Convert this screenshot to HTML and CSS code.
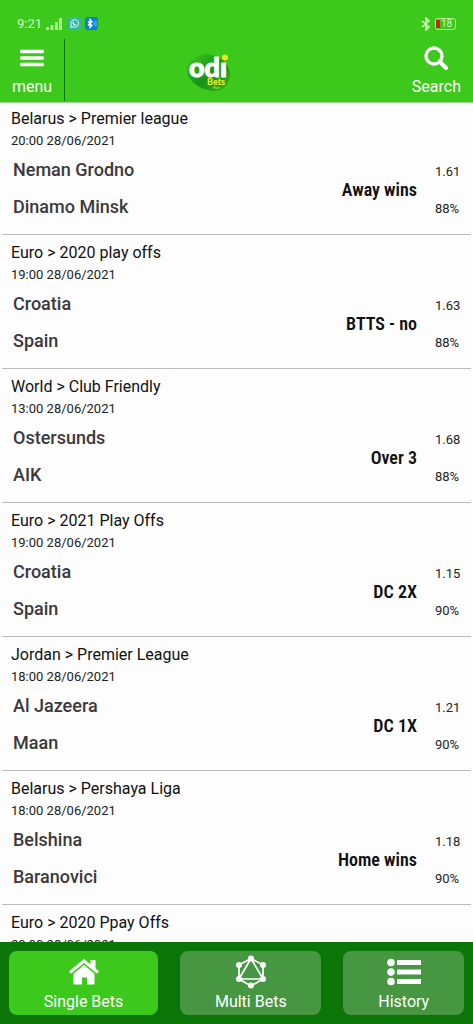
FILE: index.html
```html
<!DOCTYPE html>
<html lang="en">
<head>
<meta charset="utf-8">
<meta name="viewport" content="width=device-width, initial-scale=1">
<title>odiBets</title>
<link rel="stylesheet" href="styles.css">
</head>
<body>
<header class="header">
  <div class="status">
    <div class="status-group">
      <span class="clock">9:21</span>
      <svg class="signal" width="16" height="12" viewBox="0 0 16 12" aria-hidden="true"><path d="M0 9h3v3H0zM4.500 7h3v5h-3zM9 4h3v8H9zM13 0h3v12h-3z"/></svg>
      <svg width="13" height="13" viewBox="0 0 13 13" aria-hidden="true"><rect width="13" height="13" rx="3" fill="#35b5a3"/><path d="M2.700 10.400l.6-2.200a3.800 3.800 0 1 1 1.600 1.600z" fill="none" stroke="#d9fff2"/><path d="M5 4.800c0 2 1.500 3.300 3.200 3.300" fill="none" stroke="#d9fff2" stroke-width="1.300"/></svg>
      <svg width="13" height="13" viewBox="0 0 13 13" aria-hidden="true"><rect width="13" height="13" rx="3" fill="#087fd8"/><path d="M3 4.500l4 4-2 2v-8l2 2-4 4" fill="none" stroke="#fff" stroke-width="1.200"/><path d="M9 4.500v4M11 3.500v6" stroke="#8fd0fa" stroke-width=".8"/></svg>
    </div>
    <div class="status-group status-right">
      <svg width="10" height="14" viewBox="0 0 10 14" aria-hidden="true"><path d="M1 4l7 6-3 3V1l3 3-7 6" fill="none" stroke="#d4f7c4" stroke-width="1.500"/></svg>
      <span class="battery"><span class="battery-level"></span>18</span>
    </div>
  </div>
  <div class="toolbar">
    <button class="tool menu" type="button">
      <svg width="24" height="24" viewBox="0 0 24 24" aria-hidden="true"><path d="M1.500 5.500h21M1.500 12h21M1.500 18.500h21" stroke="#fff" stroke-width="3.400" stroke-linecap="round"/></svg>
      <span>menu</span>
    </button>
    <a class="logo" href="#" aria-label="odiBets">
      <svg width="48" height="44" viewBox="-2 0 48 44">
        <defs><linearGradient id="leaf" x1="0" y1="0" x2="1" y2="1"><stop offset="0" stop-color="#3dc81c"/><stop offset=".55" stop-color="#159219"/><stop offset="1" stop-color="#35b61c"/></linearGradient></defs>
        <path d="M9 7C2 11 -2 19 1 26c5 9 17 15 27 15 9 0 14-7 15-16C44 10 22-1 9 7z" fill="url(#leaf)"/>
        <text class="logo-main" x="2" y="27">od<tspan class="logo-i">ı</tspan></text>
        <circle cx="38" cy="7.500" r="3" fill="#f2e51b"/>
        <text class="logo-bets" x="20" y="35">Bets</text>
        <text class="logo-fun" x="26" y="39">Fun</text>
      </svg>
    </a>
    <button class="tool search" type="button">
      <svg width="24" height="24" viewBox="0 0 24 24" aria-hidden="true"><circle cx="10" cy="10" r="8" fill="none" stroke="#fff" stroke-width="3.400"/><path d="M16 16l6 6" stroke="#fff" stroke-width="4" stroke-linecap="round"/></svg>
      <span>Search</span>
    </button>
  </div>
</header>
<main class="matches">
  <article class="match">
    <h2 class="league">Belarus &gt; Premier league</h2>
    <time class="time">20:00 28/06/2021</time>
    <div class="bet"><div class="teams"><span>Neman Grodno</span><span>Dinamo Minsk</span></div><strong class="pick">Away wins</strong><div class="odds"><span>1.61</span><span>88%</span></div></div>
  </article>
  <article class="match">
    <h2 class="league">Euro &gt; 2020 play offs</h2>
    <time class="time">19:00 28/06/2021</time>
    <div class="bet"><div class="teams"><span>Croatia</span><span>Spain</span></div><strong class="pick">BTTS - no</strong><div class="odds"><span>1.63</span><span>88%</span></div></div>
  </article>
  <article class="match">
    <h2 class="league">World &gt; Club Friendly</h2>
    <time class="time">13:00 28/06/2021</time>
    <div class="bet"><div class="teams"><span>Ostersunds</span><span>AIK</span></div><strong class="pick">Over 3</strong><div class="odds"><span>1.68</span><span>88%</span></div></div>
  </article>
  <article class="match">
    <h2 class="league">Euro &gt; 2021 Play Offs</h2>
    <time class="time">19:00 28/06/2021</time>
    <div class="bet"><div class="teams"><span>Croatia</span><span>Spain</span></div><strong class="pick">DC 2X</strong><div class="odds"><span>1.15</span><span>90%</span></div></div>
  </article>
  <article class="match">
    <h2 class="league">Jordan &gt; Premier League</h2>
    <time class="time">18:00 28/06/2021</time>
    <div class="bet"><div class="teams"><span>Al Jazeera</span><span>Maan</span></div><strong class="pick">DC 1X</strong><div class="odds"><span>1.21</span><span>90%</span></div></div>
  </article>
  <article class="match">
    <h2 class="league">Belarus &gt; Pershaya Liga</h2>
    <time class="time">18:00 28/06/2021</time>
    <div class="bet"><div class="teams"><span>Belshina</span><span>Baranovici</span></div><strong class="pick">Home wins</strong><div class="odds"><span>1.18</span><span>90%</span></div></div>
  </article>
  <article class="match">
    <h2 class="league">Euro &gt; 2020 Ppay Offs</h2>
    <time class="time">20:00 28/06/2021</time>
  </article>
</main>
<nav class="tabs">
  <button class="tab tab-active" type="button" aria-current="page">
    <svg width="34" height="34" viewBox="0 0 34 34" aria-hidden="true"><path d="M3 17.500L17 6 31 17.500" fill="none" stroke="#fff" stroke-width="3"/><path d="M23.500 5h5v9.500l-5-4zM17 10l10.500 8.800V29.500h-7.500v-7h-5v7H6.500V18.800z" fill="#fff"/></svg>
    <span>Single Bets</span>
  </button>
  <button class="tab" type="button">
    <svg width="34" height="34" viewBox="0 0 34 34" aria-hidden="true"><g fill="none" stroke="#fff" stroke-width="1.700"><path d="M17 3.500l12 6.500v14l-12 7-12-7V10z"/><path d="M17 3.500l12 20.500H5z"/></g><g fill="#fff"><circle cx="17" cy="3.500" r="3"/><circle cx="29" cy="10" r="3"/><circle cx="29" cy="24" r="3"/><circle cx="17" cy="30.500" r="3"/><circle cx="5" cy="24" r="3"/><circle cx="5" cy="10" r="3"/></g></svg>
    <span>Multi Bets</span>
  </button>
  <button class="tab" type="button">
    <svg width="34" height="34" viewBox="0 0 34 34" aria-hidden="true"><g fill="#fff"><circle cx="4" cy="7.500" r="3.800"/><circle cx="4" cy="17" r="3.800"/><circle cx="4" cy="26.500" r="3.800"/><path d="M10 5h24v5H10zM10 14.500h24v5H10zM10 24h24v5H10z"/></g></svg>
    <span>History</span>
  </button>
</nav>
</body>
</html>
```
FILE: styles.css
```css
* { box-sizing: border-box; }
body {
  margin: 0;
  height: 100vh;
  display: flex;
  flex-direction: column;
  background: #fdfdfd;
  color: #111;
  font-family: Roboto, "Liberation Sans", sans-serif;
}
button { border: 0; background: none; font: inherit; color: inherit; cursor: pointer; }

.header { flex: none; background: #3dc81c; color: #fff; border-bottom: 1px solid #9fd695; }
.status {
  display: flex;
  justify-content: space-between;
  align-items: center;
  height: 39px;
  padding: 8px 17px 0 17px;
  color: #d4f7c4;
}
.status-group { display: flex; align-items: center; gap: 4px; }
.clock { font-size: 13px; line-height: 16px; }
.signal { fill: #a9ef8d; margin-right: 2px; }
.battery {
  display: flex;
  align-items: center;
  gap: 1px;
  width: 21px;
  height: 12px;
  border: 1px solid #b5ef9b;
  border-radius: 3px;
  font-size: 10px;
  line-height: 10px;
}
.battery-level { width: 4px; height: 8px; background: #c62612; }
.toolbar {
  display: grid;
  grid-template-columns: auto 1fr 1fr auto;
  height: 63px;
  padding-bottom: 1px;
}
.tool {
  display: flex;
  flex-direction: column;
  align-items: center;
  gap: 8px;
  padding: 7px 12px 0;
  font-size: 16px;
  line-height: 18px;
}
.menu { border-right: 1px solid #087708; }
.search { grid-column: 4; }
.logo { justify-self: end; margin-top: 11px; }
.logo svg { display: block; }
.logo-main { font: 900 27px Lato, sans-serif; fill: #fff; stroke: #fff; stroke-width: 1px; }
.logo-bets { font: 900 9px Lato, sans-serif; fill: #e8ee2a; }
.logo-fun { font: 4px Lato, sans-serif; fill: #e8ee2a; }

.matches { flex: 1; min-height: 0; overflow: hidden; }
.match {
  margin: 0 2px;
  padding: 7px 10px 7px 9px;
  border-bottom: 1px solid #bbb;
}
.match:first-child { padding-top: 5px; }
.league { margin: 0 0 2px; font-size: 16px; font-weight: 400; line-height: 21px; }
.time { display: block; font-size: 13px; line-height: 20px; color: #222; }
.bet { display: flex; align-items: center; padding-left: 2px; }
.teams, .odds { display: flex; flex-direction: column; }
.teams { flex: 1; align-self: flex-start; font-size: 18px; font-weight: 500; line-height: 37px; color: #3b393b; }
.pick {
  padding-top: 2px;
  font-family: "Roboto Condensed", Roboto, "Liberation Sans", sans-serif;
  font-size: 18px;
  font-weight: 600;
  line-height: 24px;
}
.odds { width: 44px; padding: 2px 0 0 18px; font-size: 13px; line-height: 37px; color: #222; }

.tabs { flex: none; display: flex; gap: 22px; padding: 9px; background: #0c7507; }
.tab {
  flex: 1 1 auto;
  display: flex;
  flex-direction: column;
  align-items: center;
  gap: 3px;
  padding: 4px 0;
  border-radius: 8px;
  background: #469642;
  color: #fff;
  font-size: 16px;
  line-height: 19px;
}
.tab-active { background: #3dc81c; }
```
